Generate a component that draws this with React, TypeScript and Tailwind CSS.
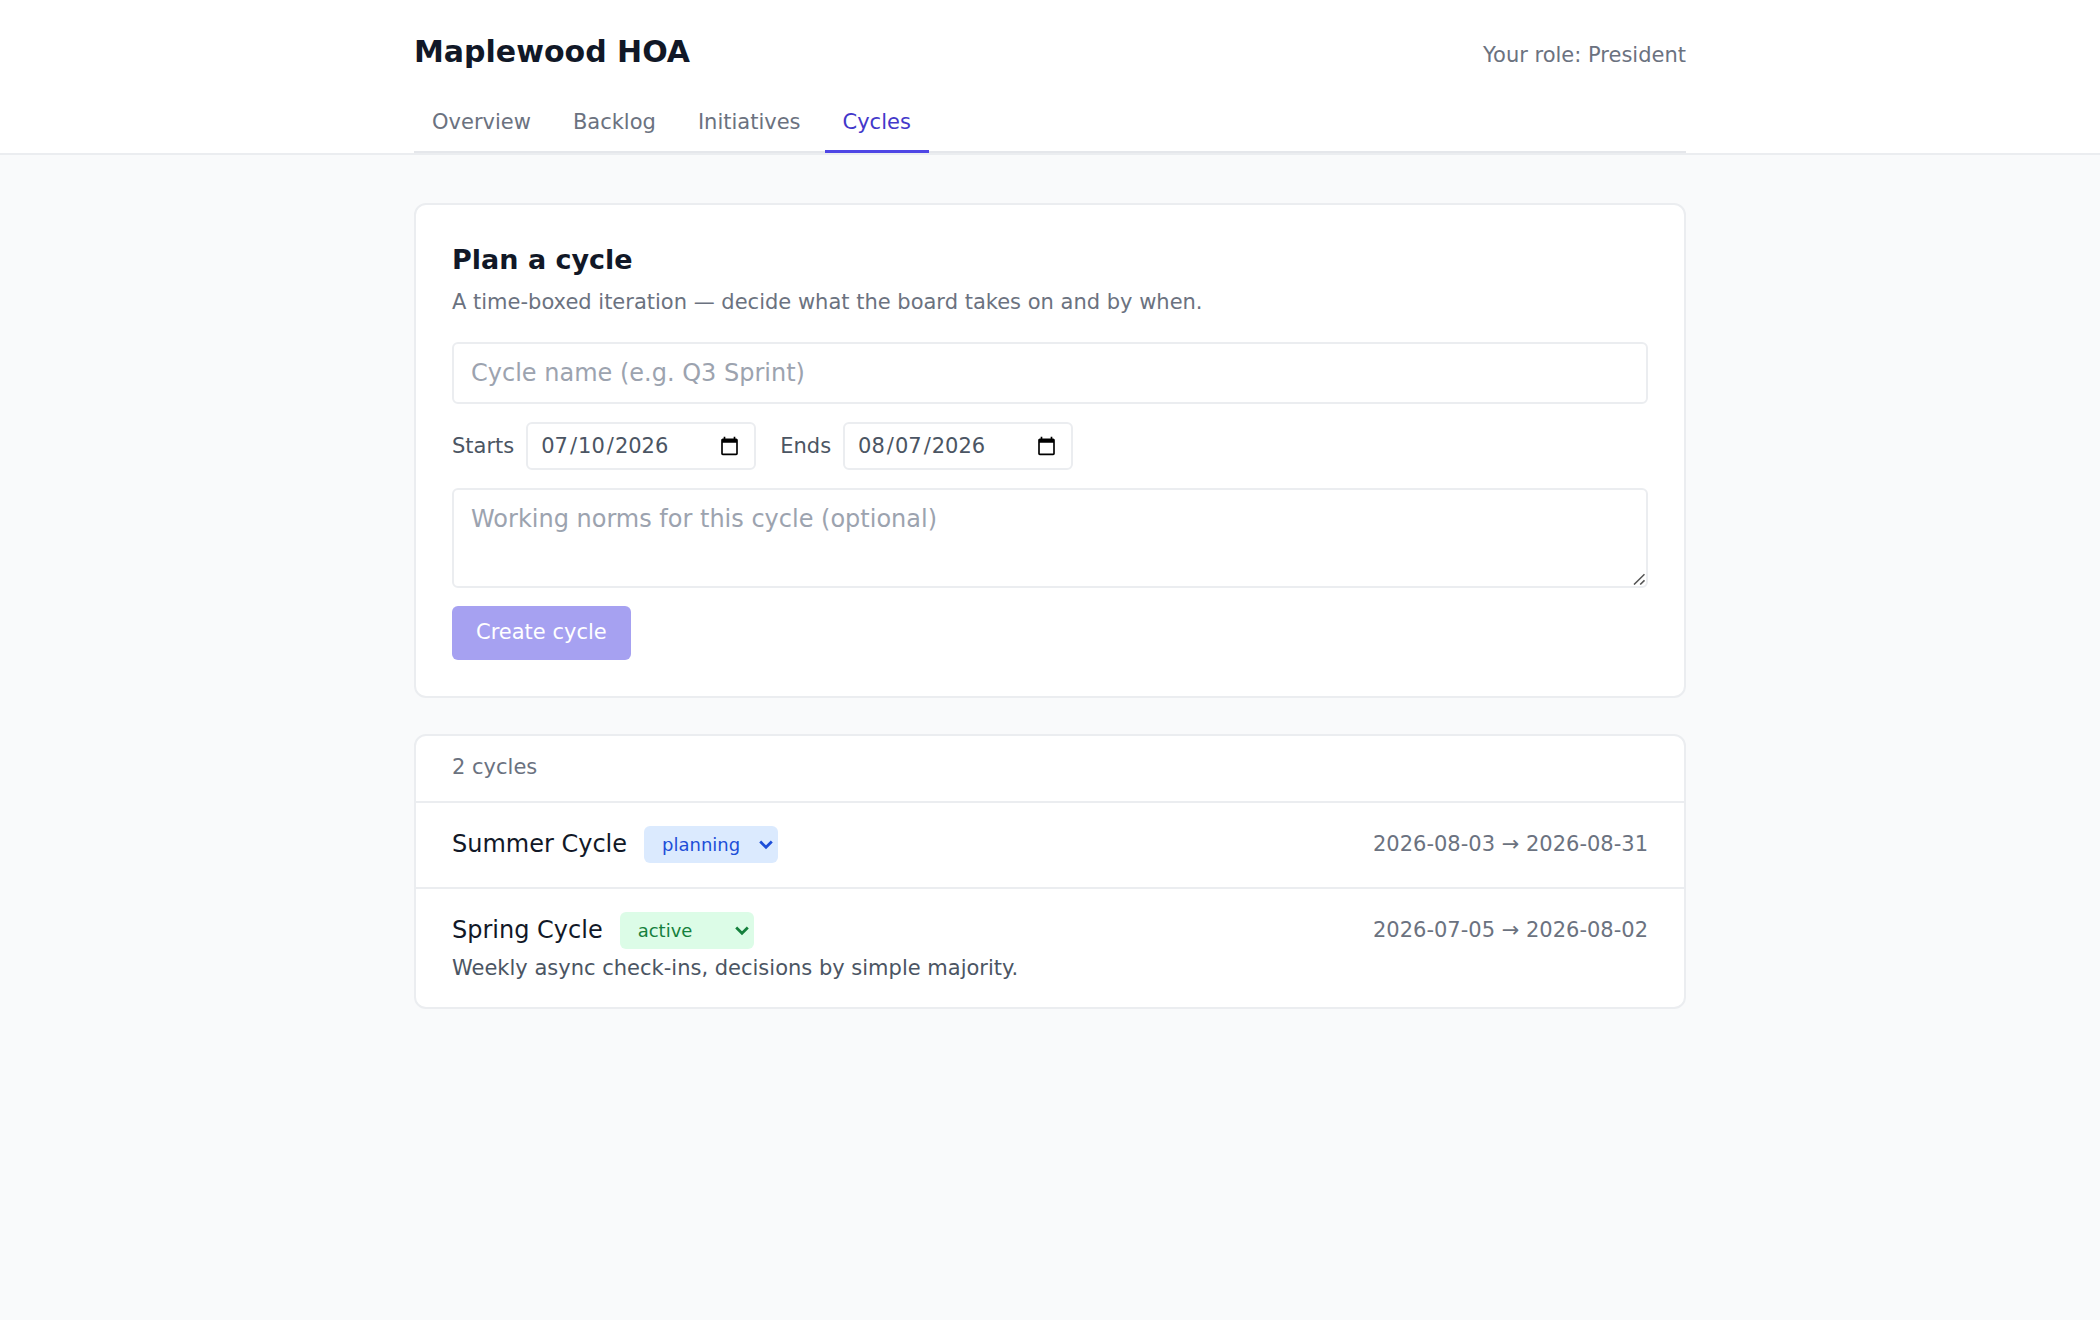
import { useState } from "react";
import type { FormEvent } from "react";
import clsx from "clsx";

type CycleStatus = "planning" | "active" | "completed";

interface Cycle {
  id: string;
  name: string;
  status: CycleStatus;
  startsOn: string;
  endsOn: string;
  norms?: string;
}

const TABS = ["Overview", "Backlog", "Initiatives", "Cycles"];

const STATUS_STYLES: Record<CycleStatus, string> = {
  planning: "bg-[#dbeafe] text-[#1d4ed8]",
  active: "bg-[#dcfce7] text-[#15803d]",
  completed: "bg-gray-100 text-gray-700",
};

const INITIAL_CYCLES: Cycle[] = [
  {
    id: "summer",
    name: "Summer Cycle",
    status: "planning",
    startsOn: "2026-08-03",
    endsOn: "2026-08-31",
  },
  {
    id: "spring",
    name: "Spring Cycle",
    status: "active",
    startsOn: "2026-07-05",
    endsOn: "2026-08-02",
    norms: "Weekly async check-ins, decisions by simple majority.",
  },
];

export default function App() {
  const [cycles, setCycles] = useState(INITIAL_CYCLES);

  function handleStatusChange(id: string, status: CycleStatus) {
    setCycles(cycles.map((cycle) => (cycle.id === id ? { ...cycle, status } : cycle)));
  }

  return (
    <div className="min-h-screen bg-gray-50 font-['DejaVu_Sans',sans-serif] text-[#111827]">
      <Header />

      <main className="mx-auto flex max-w-[1344px] flex-col gap-9 px-9 py-12">
        <CycleForm onCreate={(cycle) => setCycles([cycle, ...cycles])} />
        <CycleList cycles={cycles} onStatusChange={handleStatusChange} />
      </main>
    </div>
  );
}

function Header() {
  return (
    <header className="border-b-2 border-[#ebedf0] bg-white">
      <div className="mx-auto max-w-[1344px] px-9 pt-[30px]">
        <div className="flex items-baseline justify-between">
          <h1 className="text-[30px] leading-[44px] font-bold">Maplewood HOA</h1>
          <span className="text-[21px] leading-[30px] text-[#6b7280]">Your role: President</span>
        </div>

        <nav className="mt-[21px] flex gap-1.5 border-b-2 border-gray-200">
          {TABS.map((tab) => (
            <a
              key={tab}
              href="#"
              className={clsx(
                "-mb-0.5 border-b-3 px-[18px] pt-3 pb-[13px] text-[21px] leading-[30px]",
                tab === "Cycles"
                  ? "border-[#4f46e5] text-[#4338ca]"
                  : "border-transparent text-[#6b7280]",
              )}
            >
              {tab}
            </a>
          ))}
        </nav>
      </div>
    </header>
  );
}

function CycleForm({ onCreate }: { onCreate(cycle: Cycle): void }) {
  const [name, setName] = useState("");
  const [startsOn, setStartsOn] = useState("2026-07-10");
  const [endsOn, setEndsOn] = useState("2026-08-07");
  const [norms, setNorms] = useState("");

  function handleSubmit(event: FormEvent) {
    event.preventDefault();
    onCreate({ id: `${Date.now()}`, name, status: "planning", startsOn, endsOn, norms });
    setName("");
    setNorms("");
  }

  return (
    <section className="rounded-xl border-2 border-[#ebedf0] bg-white p-9">
      <h2 className="text-[27px] leading-[38px] font-bold">Plan a cycle</h2>
      <p className="mt-2 text-[21px] leading-[30px] text-[#6b7280]">
        A time-boxed iteration — decide what the board takes on and by when.
      </p>

      <form onSubmit={handleSubmit} className="mt-[25px] flex flex-col gap-[18px]">
        <input
          aria-label="Cycle name"
          placeholder="Cycle name (e.g. Q3 Sprint)"
          value={name}
          onChange={(event) => setName(event.target.value)}
          className="rounded-md border-2 border-[#ebedf0] px-[17px] py-[11px] text-2xl leading-9 placeholder:text-[#9ca3af]"
        />

        <div className="flex gap-6 text-[21px] leading-[30px] text-[#4b5563]">
          <DateField label="Starts" value={startsOn} onChange={setStartsOn} />
          <DateField label="Ends" value={endsOn} onChange={setEndsOn} />
        </div>

        <div className="relative flex">
          <textarea
            aria-label="Working norms"
            placeholder="Working norms for this cycle (optional)"
            value={norms}
            onChange={(event) => setNorms(event.target.value)}
            className="h-[100px] w-full rounded-md border-2 border-[#ebedf0] px-[17px] py-[11px] text-2xl leading-9 placeholder:text-[#9ca3af] [&::-webkit-resizer]:bg-transparent"
          />
          <svg
            viewBox="0 0 12 12"
            fill="none"
            stroke="#555"
            strokeWidth="1.6"
            className="pointer-events-none absolute right-[3px] bottom-[3px] size-3"
          >
            <path d="M1 11.5 11.5 1.2M7.2 11.5l4.3-4.2" />
          </svg>
        </div>

        <button
          type="submit"
          disabled={!name}
          className="self-start rounded-md bg-[#4f46e5] px-6 pt-[11px] pb-[13px] text-[21px] leading-[30px] text-white disabled:opacity-50"
        >
          Create cycle
        </button>
      </form>
    </section>
  );
}

interface DateFieldProps {
  label: string;
  value: string;
  onChange(value: string): void;
}

function DateField({ label, value, onChange }: DateFieldProps) {
  return (
    <label className="flex items-center gap-3">
      {label}
      <input
        type="date"
        value={value}
        onChange={(event) => onChange(event.target.value)}
        className="h-12 w-[230px] rounded-md border-2 border-[#ebedf0] px-3 [&::-webkit-datetime-edit-day-field]:pr-0.5 [&::-webkit-datetime-edit-month-field]:pr-0.5 [&::-webkit-datetime-edit-year-field]:pr-0.5"
      />
    </label>
  );
}

interface CycleListProps {
  cycles: Cycle[];
  onStatusChange(id: string, status: CycleStatus): void;
}

function CycleList({ cycles, onStatusChange }: CycleListProps) {
  return (
    <section className="rounded-xl border-2 border-[#ebedf0] bg-white">
      <h2 className="px-9 pt-4 pb-[19px] text-[21px] leading-[30px] text-[#6b7280]">
        {cycles.length} cycles
      </h2>

      <ul>
        {cycles.map((cycle) => (
          <li key={cycle.id} className="border-t-2 border-[#ebedf0] px-9 pt-[23px] pb-6">
            <div className="flex items-start justify-between">
              <div className="flex items-start gap-[17px]">
                <span className="text-2xl leading-9">{cycle.name}</span>
                <StatusSelect
                  label={`Status of ${cycle.name}`}
                  status={cycle.status}
                  onChange={(status) => onStatusChange(cycle.id, status)}
                />
              </div>
              <span className="text-[21px] leading-9 text-[#6b7280]">
                {cycle.startsOn} → {cycle.endsOn}
              </span>
            </div>
            {cycle.norms && (
              <p className="mt-1 text-[21px] leading-[30px] text-[#4b5563]">{cycle.norms}</p>
            )}
          </li>
        ))}
      </ul>
    </section>
  );
}

interface StatusSelectProps {
  label: string;
  status: CycleStatus;
  onChange(status: CycleStatus): void;
}

function StatusSelect({ label, status, onChange }: StatusSelectProps) {
  return (
    <div className={clsx("relative flex rounded-md", STATUS_STYLES[status])}>
      <select
        aria-label={label}
        value={status}
        onChange={(event) => onChange(event.target.value as CycleStatus)}
        className="h-[37px] w-[134px] appearance-none rounded-md pl-[18px] text-lg leading-6"
      >
        <option value="planning">planning</option>
        <option value="active">active</option>
        <option value="completed">completed</option>
      </select>
      <svg
        viewBox="0 0 14 10"
        fill="none"
        stroke="currentColor"
        strokeWidth="2.8"
        className="pointer-events-none absolute top-3.5 right-[5px] h-2.5 w-3.5"
      >
        <path d="m1.2 1.6 5.8 5.6 5.8-5.6" />
      </svg>
    </div>
  );
}
